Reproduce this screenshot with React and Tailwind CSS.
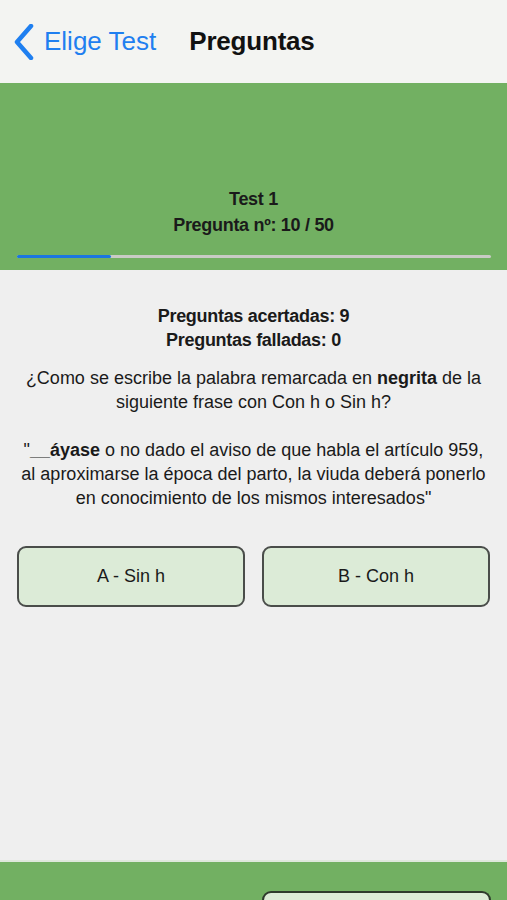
import React from "react";

export default function App() {
  return (
    <div
      className="w-[507px] h-[900px] overflow-hidden flex flex-col bg-[#efefef] text-[#111]"
      style={{ fontFamily: '"Liberation Sans", Arial, sans-serif' }}
    >
      {/* Nav bar */}
      <div className="h-[83px] shrink-0 bg-[#f3f4f2] flex items-center pl-[14px]">
        <svg width="20" height="36" viewBox="0 0 20 36" className="shrink-0">
          <polyline
            points="17,2 3,18 17,34"
            fill="none"
            stroke="#1f7ff0"
            strokeWidth="4.5"
            strokeLinecap="round"
            strokeLinejoin="round"
          />
        </svg>
        <span className="ml-[10px] text-[26px] text-[#1f7ff0]">Elige Test</span>
        <span className="ml-[33px] text-[26px] font-bold text-[#111] tracking-[-0.2px]">Preguntas</span>
      </div>

      {/* Green header */}
      <div className="h-[187px] shrink-0 bg-[#72b062] flex flex-col items-center justify-end pb-[12px]">
        <div className="text-[18px] leading-[26px] font-bold text-[#1a1a1a] text-center tracking-[-0.3px]">
          <div>Test 1</div>
          <div>Pregunta nº: 10 / 50</div>
        </div>
        <div className="mt-[17px] w-[474px] h-[3px] bg-[#c9cbc5] rounded-full flex">
          <div className="w-[94px] h-full bg-[#1b76e0] rounded-full" />
        </div>
      </div>

      {/* Body */}
      <div className="flex-1 flex flex-col items-center pt-[34px]">
        <div className="text-[18px] leading-[24px] font-bold text-[#1a1a1a] text-center tracking-[-0.3px]">
          <div>Preguntas acertadas: 9</div>
          <div>Preguntas falladas: 0</div>
        </div>
        <div className="mt-[14px] text-[18px] leading-[24px] text-[#1a1a1a] text-center whitespace-nowrap">
          <p>
            ¿Como se escribe la palabra remarcada en <b>negrita</b> de la
            <br />
            siguiente frase con Con h o Sin h?
          </p>
          <p className="mt-[24px]">
            "<b>__áyase</b> o no dado el aviso de que habla el artículo 959,
            <br />
            al aproximarse la época del parto, la viuda deberá ponerlo
            <br />
            en conocimiento de los mismos interesados"
          </p>
        </div>
        <div className="mt-[36px] w-full px-[17px] grid grid-cols-2 gap-[17px]">
          <button className="h-[61px] rounded-[9px] border-2 border-[#4a4d4a] bg-[#dcebd7] text-[18px] text-[#1a1a1a]">
            A - Sin h
          </button>
          <button className="h-[61px] rounded-[9px] border-2 border-[#4a4d4a] bg-[#dcebd7] text-[18px] text-[#1a1a1a]">
            B - Con h
          </button>
        </div>
      </div>

      {/* Bottom bar */}
      <div className="h-[2px] shrink-0 bg-[#dfe8dc]" />
      <div className="h-[38px] shrink-0 bg-[#72b062] flex justify-end items-end pr-[16px]">
        <div className="w-[229px] h-[9px] rounded-t-[9px] border-2 border-b-0 border-[#2e3a2c] bg-[#dcebd7]" />
      </div>
    </div>
  );
}
